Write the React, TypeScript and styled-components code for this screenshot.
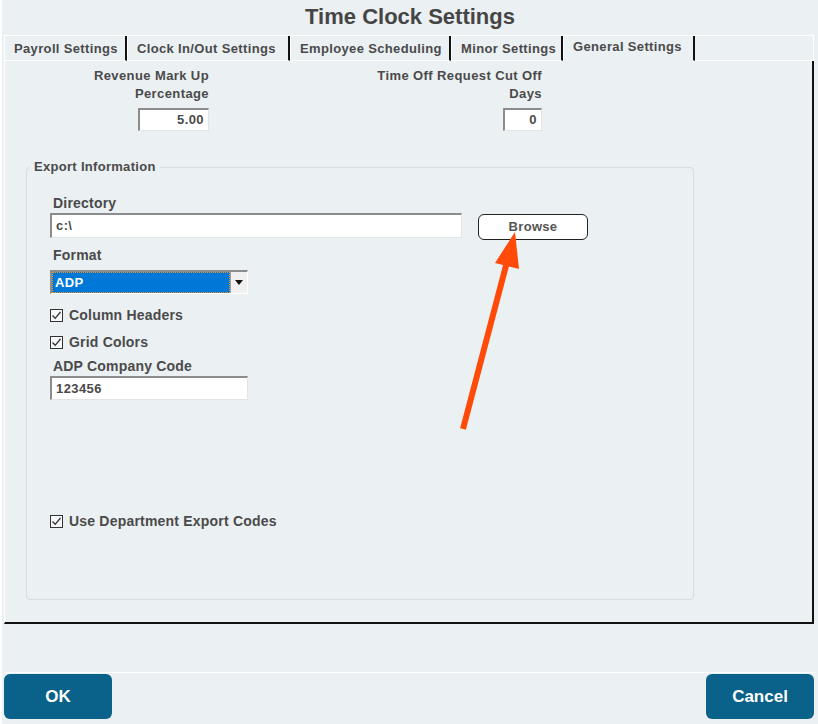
import styled, { createGlobalStyle } from "styled-components";

const GlobalStyle = createGlobalStyle`
  html, body {
    margin: 0;
    padding: 0;
    background: #ebf0f3;
  }
  body {
    font-family: "Liberation Sans", Arial, sans-serif;
    color: #4a4a4a;
  }
`;

const Window = styled.div`
  position: relative;
  width: 818px;
  height: 724px;
  background: #ebf0f3;
  box-sizing: border-box;
  border-left: 2px solid #fff;
  overflow: hidden;
`;

const Title = styled.h1`
  margin: 0;
  height: 35px;
  line-height: 34px;
  text-align: center;
  font-size: 22px;
  font-weight: bold;
  color: #454545;
`;

const TabControl = styled.div`
  margin-left: 2px;
  width: 810px;
`;

const TabStrip = styled.div`
  display: flex;
  height: 26px;
  box-sizing: border-box;
  border-top: 1px solid #fff;
`;

const Tab = styled.div<{ $w: number; $active?: boolean }>`
  width: ${(p) => p.$w}px;
  flex: none;
  box-sizing: border-box;
  padding-left: 9px;
  border-left: 1px solid #fff;
  border-right: 2px solid #111;
  border-bottom: ${(p) => (p.$active ? "1px solid transparent" : "1px solid #fff")};
  font-size: 13px;
  font-weight: bold;
  letter-spacing: 0.35px;
  line-height: ${(p) => (p.$active ? "22px" : "26px")};
  white-space: nowrap;
  color: #4a4a4a;
`;

const TabFiller = styled.div`
  flex: 1;
  border-right: 1px solid #fff;
  border-bottom: 1px solid #fff;
`;

const Panel = styled.div`
  height: 563px;
  box-sizing: border-box;
  border-left: 1px solid #fff;
  border-right: 2px solid #111;
  border-bottom: 2px solid #111;
  padding-top: 6px;
`;

const TopRow = styled.div`
  display: flex;
`;

const NumberBlock = styled.div<{ $w: number }>`
  width: ${(p) => p.$w}px;
  display: flex;
  flex-direction: column;
  align-items: flex-end;
`;

const FieldLabel = styled.div`
  font-size: 13px;
  font-weight: bold;
  letter-spacing: 0.4px;
  line-height: 18px;
  text-align: right;
  color: #4a4a4a;
`;

const TextBox = styled.div<{ $w: number; $right?: boolean }>`
  width: ${(p) => p.$w}px;
  height: 23px;
  box-sizing: border-box;
  background: #fff;
  border-top: 2px solid #8c8c8c;
  border-left: 2px solid #8c8c8c;
  border-right: 1px solid #e4e4e4;
  border-bottom: 1px solid #e4e4e4;
  font-size: 13px;
  font-weight: bold;
  letter-spacing: 0.4px;
  line-height: 20px;
  padding: 0 4px;
  text-align: ${(p) => (p.$right ? "right" : "left")};
  color: #4a4a4a;
`;

const NumberBox = styled(TextBox)`
  margin-top: 5px;
`;

const Fieldset = styled.fieldset`
  margin: 28px 0 0 21px;
  padding: 0 0 0 23px;
  width: 668px;
  height: 441px;
  box-sizing: border-box;
  border: 1px solid #d5dce2;
  border-radius: 4px;
`;

const Legend = styled.legend`
  margin-left: -20px;
  padding: 0 4px;
  font-size: 13px;
  font-weight: bold;
  letter-spacing: 0.3px;
  line-height: 16px;
  color: #4a4a4a;
`;

const SmallLabel = styled.div<{ $top: number }>`
  margin-top: ${(p) => p.$top}px;
  padding-left: 3px;
  font-size: 14px;
  font-weight: bold;
  letter-spacing: 0.2px;
  line-height: 16px;
  color: #4a4a4a;
`;

const DirRow = styled.div`
  display: flex;
  align-items: flex-start;
  margin-top: 2px;
`;

const DirBox = styled(TextBox)`
  height: 25px;
  line-height: 22px;
`;

const BrowseButton = styled.button`
  margin: 1px 0 0 16px;
  width: 110px;
  height: 26px;
  background: #fff;
  border: 1px solid #222;
  border-radius: 6px;
  font-family: "Liberation Sans", Arial, sans-serif;
  font-size: 13px;
  font-weight: bold;
  letter-spacing: 0.3px;
  color: #555;
  padding: 0 0 2px;
`;

const Select = styled.div`
  margin-top: 7px;
  width: 198px;
  height: 24px;
  box-sizing: border-box;
  display: flex;
  border-top: 2px solid #8c8c8c;
  border-left: 2px solid #8c8c8c;
  border-right: 1px solid #fff;
  border-bottom: 1px solid #fff;
  background: #fff;
`;

const SelectValue = styled.div`
  flex: 1;
  background: #0078d7;
  border: 1px dotted #f7931e;
  color: #fff;
  font-size: 13px;
  font-weight: bold;
  letter-spacing: 0.3px;
  line-height: 19px;
  padding-left: 2px;
`;

const SelectArrow = styled.div`
  width: 16px;
  background: #f0f0f0;
  border-left: 1px solid #a0a0a0;
  display: flex;
  align-items: center;
  justify-content: center;
`;

const CheckRow = styled.div<{ $top: number }>`
  margin-top: ${(p) => p.$top}px;
  display: flex;
  align-items: center;
  gap: 6px;
  height: 18px;
  font-size: 14px;
  font-weight: bold;
  letter-spacing: 0.2px;
  color: #4a4a4a;
`;

const CheckBox = styled.span`
  width: 13px;
  height: 13px;
  box-sizing: border-box;
  border: 1px solid #333;
  background: #f6f8f9;
  display: flex;
  align-items: center;
  justify-content: center;
`;

const CodeBox = styled(TextBox)`
  margin-top: 2px;
  height: 24px;
  line-height: 21px;
`;

const Footer = styled.div`
  margin: 48px 0 0 2px;
  border-top: 1px solid #fff;
  padding-top: 1px;
  display: flex;
  justify-content: space-between;
  width: 810px;
`;

const ActionButton = styled.button`
  width: 108px;
  height: 45px;
  background: #0a6189;
  border: none;
  border-radius: 6px;
  color: #fff;
  font-family: "Liberation Sans", Arial, sans-serif;
  font-size: 17px;
  font-weight: bold;
`;

const ArrowLayer = styled.svg`
  position: absolute;
  left: 0;
  top: 0;
  pointer-events: none;
`;

function Check() {
  return (
    <svg width="11" height="11" viewBox="0 0 11 11">
      <path d="M1.5 5.5 L4.2 8.3 L9.5 2" fill="none" stroke="#333" strokeWidth="1.3" />
    </svg>
  );
}

function Checked({ label, top }: { label: string; top: number }) {
  return (
    <CheckRow $top={top}>
      <CheckBox>
        <Check />
      </CheckBox>
      {label}
    </CheckRow>
  );
}

const tabs = [
  { label: "Payroll Settings", w: 123 },
  { label: "Clock In/Out Settings", w: 163 },
  { label: "Employee Scheduling", w: 161 },
  { label: "Minor Settings", w: 112 },
  { label: "General Settings", w: 132, active: true },
];

export default function App() {
  return (
    <Window>
      <GlobalStyle />
      <Title>Time Clock Settings</Title>
      <TabControl>
        <TabStrip>
          {tabs.map((t) => (
            <Tab key={t.label} $w={t.w} $active={t.active}>
              {t.label}
            </Tab>
          ))}
          <TabFiller />
        </TabStrip>
        <Panel>
          <TopRow>
            <NumberBlock $w={204}>
              <FieldLabel>
                Revenue Mark Up
                <br />
                Percentage
              </FieldLabel>
              <NumberBox $w={71} $right>
                5.00
              </NumberBox>
            </NumberBlock>
            <NumberBlock $w={333}>
              <FieldLabel>
                Time Off Request Cut Off
                <br />
                Days
              </FieldLabel>
              <NumberBox $w={39} $right>
                0
              </NumberBox>
            </NumberBlock>
          </TopRow>
          <Fieldset>
            <Legend>Export Information</Legend>
            <SmallLabel $top={20}>Directory</SmallLabel>
            <DirRow>
              <DirBox $w={412}>c:\</DirBox>
              <BrowseButton>Browse</BrowseButton>
            </DirRow>
            <SmallLabel $top={7}>Format</SmallLabel>
            <Select>
              <SelectValue>ADP</SelectValue>
              <SelectArrow>
                <svg width="8" height="5" viewBox="0 0 8 5">
                  <path d="M0 0 H8 L4 5 Z" fill="#111" />
                </svg>
              </SelectArrow>
            </Select>
            <Checked label="Column Headers" top={12} />
            <Checked label="Grid Colors" top={9} />
            <SmallLabel $top={7}>ADP Company Code</SmallLabel>
            <CodeBox $w={198}>123456</CodeBox>
            <Checked label="Use Department Export Codes" top={112} />
          </Fieldset>
        </Panel>
      </TabControl>
      <Footer>
        <ActionButton>OK</ActionButton>
        <ActionButton>Cancel</ActionButton>
      </Footer>
      <ArrowLayer width="818" height="724" viewBox="0 0 818 724">
        <line x1="461" y1="429" x2="506" y2="258" stroke="#ff4a0a" strokeWidth="6" />
        <polygon points="513,232 493,263 517,269" fill="#ff4a0a" />
      </ArrowLayer>
    </Window>
  );
}
